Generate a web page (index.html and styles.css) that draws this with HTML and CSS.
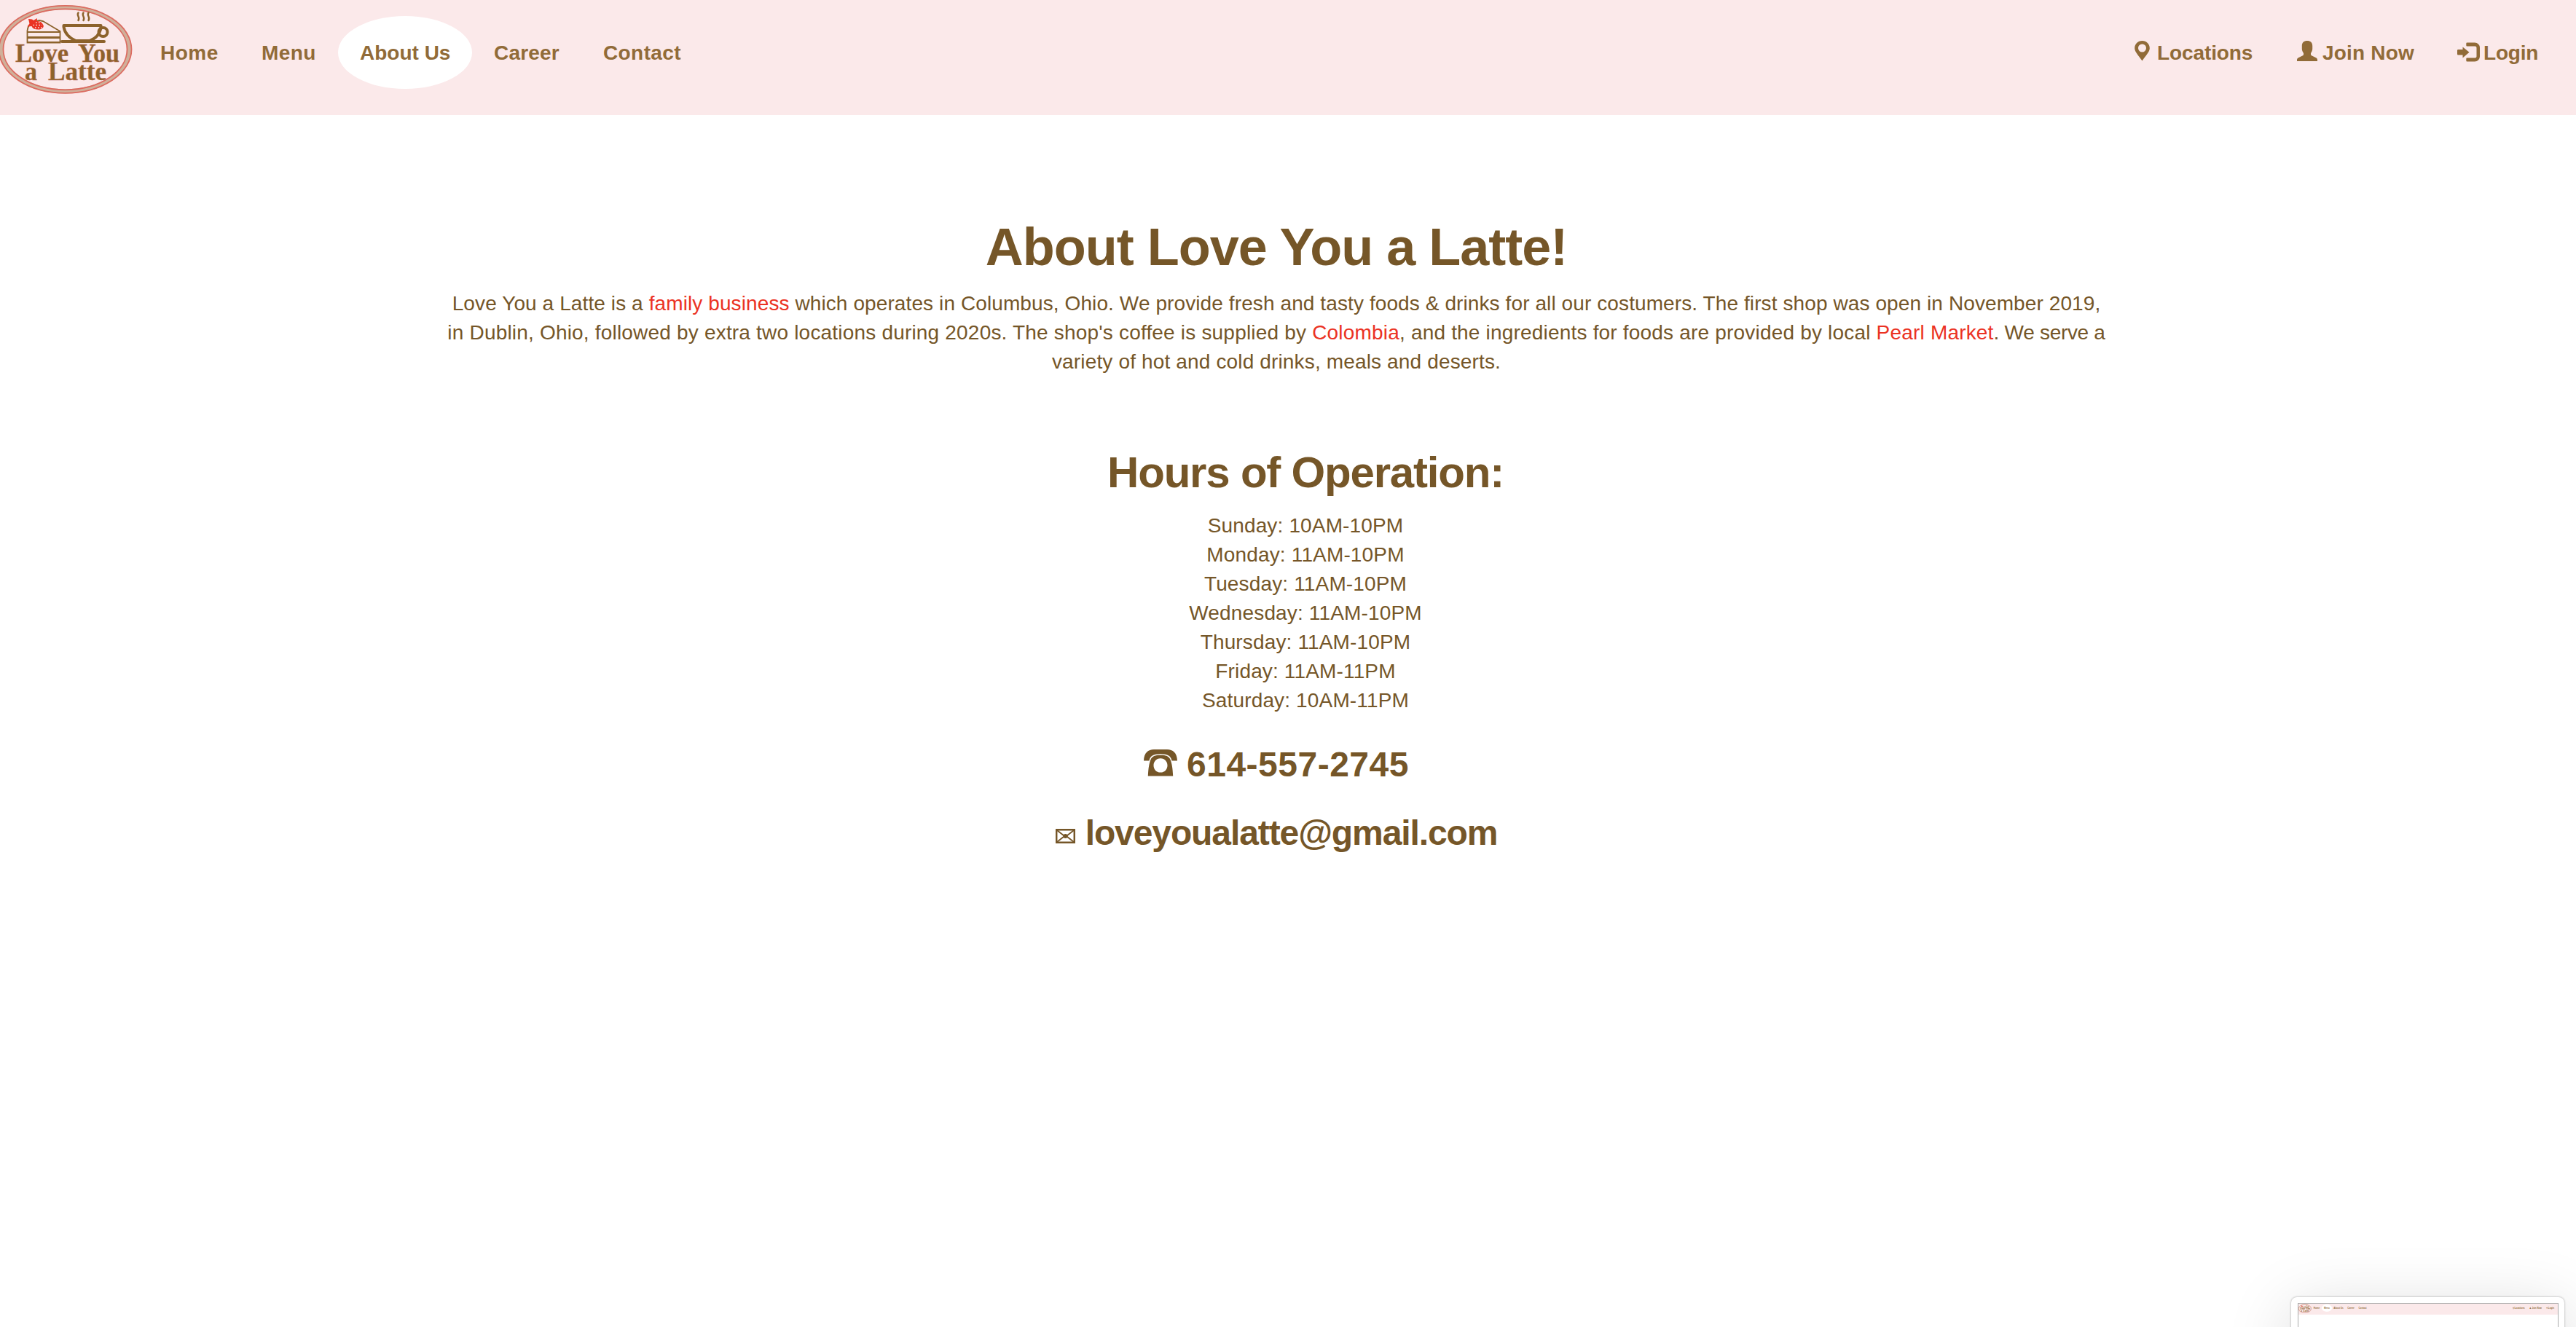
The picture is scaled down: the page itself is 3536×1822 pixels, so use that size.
FILE: index.html
```html
<!DOCTYPE html>
<html lang="en">
<head>
<meta charset="utf-8">
<title>Love You a Latte - About Us</title>
<link rel="stylesheet" href="styles.css">
</head>
<body>
<header class="navbar">
  <svg class="logo" viewBox="0 0 182 130" aria-label="Love You a Latte">
    <g id="logo-art">
      <ellipse cx="89.500" cy="67.800" rx="88" ry="57.500" fill="none" stroke="#d0b09a" stroke-width="6"/>
      <ellipse cx="89.500" cy="67.800" rx="91" ry="60" fill="none" stroke="#dc6b60" stroke-width="1.800"/>
      <ellipse cx="89.500" cy="67.800" rx="85" ry="55.500" fill="none" stroke="#dc6b60" stroke-width="1.800"/>
      <g fill="none" stroke="#8c622b">
        <path stroke-width="1.800" d="M37.500 58.500V42C38 36 42 32 46 30L54 28 59 29 82.500 43V58.500ZM38 44H82"/>
        <path stroke-width="3" d="M38 51.500H82"/>
        <path stroke-width="1.800" d="M38 58H82"/>
        <path stroke-width="4" stroke-linecap="round" d="M85 57H143"/>
        <path stroke-width="4" stroke-linejoin="round" d="M87.500 35H138.500V38C137 47 131 53 123 56H104C95 52 89 46 87.500 37Z"/>
        <circle stroke-width="4" cx="141.500" cy="44" r="6"/>
        <path stroke-width="2.400" stroke-linecap="round" d="M107.500 17.500c-3 4 3 6 0 10.500M114.500 17.500c-3 4 3 6 0 10.500M121.500 17.500c-3 4 3 6 0 10.500"/>
      </g>
      <path fill="#ea3323" d="M39 26l5 .5 2 1.500 5-3-.5 4c5-.5 8.500 3 9.300 6.500 0 3.500-3.500 5-7.300 5-5 0-8-1.500-9-4.500l-6 .5 3-4z"/>
      <path stroke="#fbe9ea" stroke-width="1.500" stroke-dasharray="1.500 2.500" d="M45.500 34.500H58M48 38H58M49 31H57"/>
      <g class="logo-text">
        <text x="21" y="85" textLength="73" lengthAdjust="spacingAndGlyphs">Love</text>
        <text x="107" y="85" textLength="57" lengthAdjust="spacingAndGlyphs">You</text>
        <text x="34" y="109.500" textLength="17" lengthAdjust="spacingAndGlyphs">a</text>
        <text x="66" y="109.500" textLength="80" lengthAdjust="spacingAndGlyphs">Latte</text>
      </g>
    </g>
  </svg>
  <nav class="menu">
    <a class="item home">Home</a>
    <a class="item menu-link">Menu</a>
    <a class="item about">About Us</a>
    <a class="item career">Career</a>
    <a class="item contact">Contact</a>
  </nav>
  <nav class="account">
    <a class="entry locations"><svg width="21" height="28" viewBox="0 0 21 28"><path fill="currentColor" fill-rule="evenodd" d="M10.500 0C4.500 0 .2 4.500.2 10.200c0 5 5 9.500 10.300 17.400 5.300-7.900 10.300-12.400 10.300-17.400C20.800 4.500 16.500 0 10.500 0zm0 4.500a5.500 5.500 0 1 1 0 11 5.500 5.500 0 0 1 0-11z"/></svg><span>Locations</span></a>
    <a class="entry join"><svg width="28" height="28" viewBox="0 0 28 28"><path fill="currentColor" d="M14 0c4.500 0 7.200 2.500 7.200 7v4c0 2.200-.8 4-2.200 6v1.500c0 1 .5 1.600 1.500 2.100l5.500 2.600c1.300.7 2 1.600 2 3V28H0v-1.800c0-1.400.7-2.300 2-3l5.500-2.600c1-.5 1.500-1.100 1.500-2.100V17c-1.400-2-2.200-3.800-2.200-6V7c0-4.500 2.700-7 7.200-7z"/></svg><span>Join Now</span></a>
    <a class="entry login"><svg width="31" height="27" viewBox="0 0 31 27"><path fill="currentColor" d="M13.500.5H24a7 7 0 0 1 7 7v12a7 7 0 0 1-7 7H13.500a1.200 1.200 0 0 1-1.200-1.200v-2.600a1.200 1.200 0 0 1 1.200-1.200H24.500a2 2 0 0 0 2-2v-12a2 2 0 0 0-2-2H13.500a1.200 1.200 0 0 1-1.200-1.200V1.700A1.200 1.200 0 0 1 13.500.5zM7.500 6.500L16.500 13.800 7.500 21.500V17.500H1.200A1.200 1.200 0 0 1 0 16.300v-5a1.200 1.200 0 0 1 1.200-1.200H7.500z"/></svg><span>Login</span></a>
  </nav>
</header>
<main class="content">
  <h1 class="title">About Love You a Latte!</h1>
  <p class="intro">
    <span class="line line-one">Love You a Latte is a <a class="link">family business</a> which operates in Columbus, Ohio. We provide fresh and tasty foods &amp; drinks for all our costumers. The first shop was open in November 2019,</span>
    <span class="line line-two">in Dublin, Ohio, followed by extra two locations during 2020s. The shop's coffee is supplied by <a class="link">Colombia</a>, and the ingredients for foods are provided by local <a class="link">Pearl Market</a><span class="tight">. We serve a</span></span>
    <span class="line line-three">variety of hot and cold drinks, meals and deserts.</span>
  </p>
  <section class="hours">
    <h2 class="subtitle">Hours of Operation:</h2>
    <ul class="days">
      <li>Sunday: 10AM-10PM</li>
      <li>Monday: 11AM-10PM</li>
      <li>Tuesday: 11AM-10PM</li>
      <li>Wednesday: 11AM-10PM</li>
      <li>Thursday: 11AM-10PM</li>
      <li>Friday: 11AM-11PM</li>
      <li>Saturday: 10AM-11PM</li>
    </ul>
  </section>
  <h3 class="reach phone"><svg width="46" height="37" viewBox="0 0 46 48" preserveAspectRatio="none"><path fill="currentColor" fill-rule="evenodd" d="M0 20C.3 6 6 0 14 0H32C40 0 45.700 6 46 20H38.500C37.500 12 33 8 23 8S8.500 12 7.500 20zM9.500 18C11.500 12 15.500 10 23 10s11.500 2 13.500 8c2 6 3.200 15 3.700 29.500H5.800C6.300 33 7.500 24 9.500 18zM23 16C17 16 13.500 22 13.500 28.500S17 41 23 41s9.500-6 9.500-12.500S29 16 23 16z"/></svg><span>614-557-2745</span></h3>
  <h3 class="reach email"><svg width="27" height="20" viewBox="0 0 27 20"><path fill="none" stroke="currentColor" stroke-width="2.500" d="M1.200 1.200H25.800V18.800H1.200Z"/><path fill="none" stroke="currentColor" stroke-width="1.800" d="M2 2L13.500 11 25 2M2 18L13.500 9 25 18"/><circle cx="13.500" cy="10" r="3" fill="currentColor"/></svg><span>loveyoualatte@gmail.com</span></h3>
</main>
<aside class="preview">
  <div class="preview-page">
    <div class="preview-bar">
      <svg class="preview-logo" viewBox="0 0 182 130"><use href="#logo-art"/></svg>
      <div class="preview-menu"><span class="p-short">Home</span><span class="p-short preview-active">Menu</span><span class="p-long">About Us</span><span class="p-mid">Career</span><span class="p-mid">Contact</span></div>
      <div class="preview-account"><span>⚲ Locations</span><span>♟ Join Now</span><span>⊃Login</span></div>
    </div>
  </div>
</aside>
</body>
</html>
```
FILE: styles.css
```css
* { box-sizing: border-box; }
html, body { height: 100%; overflow: hidden; }
body {
  margin: 0;
  background: #fff;
  color: #755628;
  font: 28px/40px "Liberation Sans", Arial, sans-serif;
}
.navbar {
  display: flex;
  height: 158px;
  background: #fbe9ea;
  color: #916b38;
  font-weight: bold;
}
.logo { width: 182px; height: 130px; margin-right: 8px; flex: none; }
.logo-text {
  fill: #8c622b;
  stroke: #b9705a;
  stroke-width: .5px;
  font: bold 36px "Liberation Serif", serif;
}
.menu { display: flex; padding-top: 22px; }
.item { height: 100px; padding: 31px 0 0 30px; border-radius: 50%; white-space: nowrap; }
.home { width: 139px; letter-spacing: .5px; }
.menu-link { width: 135px; letter-spacing: .4px; }
.about { width: 184px; background: #fff; }
.career { width: 150px; letter-spacing: .2px; }
.contact { width: 168px; letter-spacing: .4px; }
.account { display: flex; margin-left: auto; padding: 53px 51px 0 0; }
.entry { display: flex; white-space: nowrap; }
.entry svg { flex: none; margin-top: 3px; }
.locations svg { margin-right: 10px; }
.locations { width: 223px; letter-spacing: -.1px; }
.join svg { margin-right: 7px; }
.join { width: 220px; letter-spacing: .2px; }
.login svg { margin: 5px 5px 0 0; }
.login { width: 112px; letter-spacing: -.2px; }
.content { width: 2340px; margin: 0 auto; transform: translateX(-16px); text-align: center; }
h1, h2, h3, p, ul { margin: 0; padding: 0; }
h1, h2, h3 { font-weight: bold; }
.title { padding-top: 142px; font-size: 72px; line-height: 79px; letter-spacing: -1px; }
.intro { margin-top: 18px; }
.line { display: block; white-space: nowrap; }
.line-one { letter-spacing: .1px; }
.line-two { letter-spacing: .19px; }
.tight { letter-spacing: -.3px; }
.line-three { letter-spacing: .15px; }
.link { color: #eb3223; }
.hours { padding: 99px 0 0 80px; }
.subtitle { font-size: 60px; line-height: 66px; letter-spacing: -1.2px; }
.days { margin-top: 20px; list-style: none; letter-spacing: .15px; }
.reach { display: flex; justify-content: center; font-size: 48px; line-height: 53px; }
.reach svg { flex: none; }
.phone { margin-top: 41px; letter-spacing: .5px; }
.phone svg { margin: 6px 13px 0 0; }
.email { margin-top: 41px; letter-spacing: -1.1px; }
.email svg { margin: 21px 14px 0 0; }
.preview {
  position: fixed;
  left: 3145px;
  top: 1781px;
  width: 375px;
  height: 250px;
  padding: 8px 8px 0 9px;
  border-radius: 8px;
  background: #fff;
  box-shadow: 0 0 3px rgba(0,0,0,.35), 0 16px 90px rgba(0,0,0,.15);
}
.preview-page { height: 240px; border: 1px solid #aaa; }
.preview-bar { display: flex; height: 15px; background: #fbe9ea; font: bold 3px/4px "Liberation Sans", sans-serif; color: #916b38; }
.preview-logo { width: 18px; height: 13px; flex: none; }
.preview-menu { display: flex; align-items: center; height: 12px; text-align: center; }
.p-short { width: 14px; }
.p-mid { width: 16px; }
.p-long { width: 18px; }
.preview-active { padding: 3px 0; background: #fff; border-radius: 50%; }
.preview-account { display: flex; align-items: center; gap: 6px; height: 12px; margin-left: auto; margin-right: 5px; }
```
